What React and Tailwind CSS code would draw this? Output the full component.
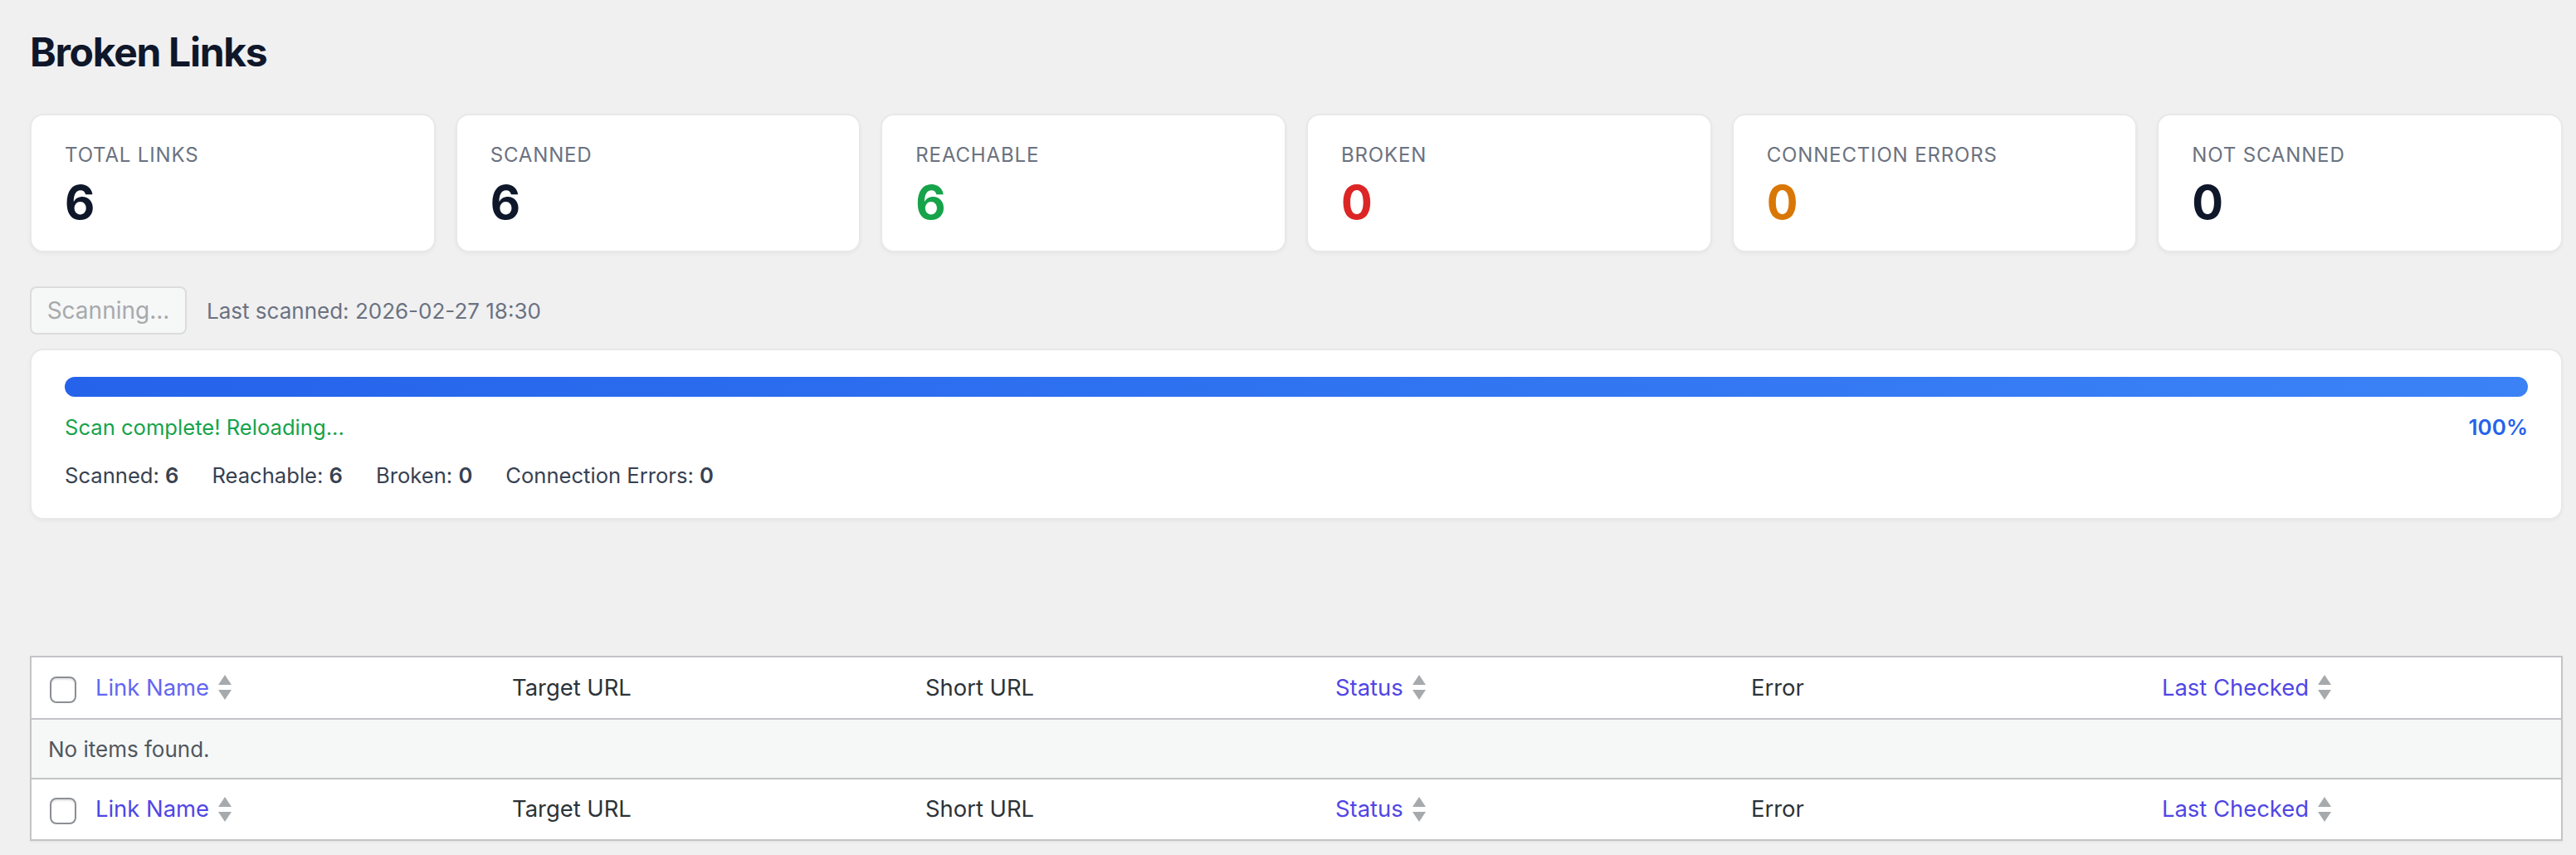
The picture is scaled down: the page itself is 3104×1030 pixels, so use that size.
const stats = [
  { label: 'Total Links', value: 6, color: 'text-[#0f172a]' },
  { label: 'Scanned', value: 6, color: 'text-[#0f172a]' },
  { label: 'Reachable', value: 6, color: 'text-[#16a34a]' },
  { label: 'Broken', value: 0, color: 'text-[#dc2626]' },
  { label: 'Connection Errors', value: 0, color: 'text-[#d97706]' },
  { label: 'Not Scanned', value: 0, color: 'text-[#0f172a]' },
];

const results = [
  { label: 'Scanned', value: 6 },
  { label: 'Reachable', value: 6 },
  { label: 'Broken', value: 0 },
  { label: 'Connection Errors', value: 0 },
];

const SortIcon = () => (
  <svg width="16" height="30" viewBox="0 0 16 30" className="ml-[11px] shrink-0 fill-[#a7aaad]">
    <path d="M8 0l8 12H0z" />
    <path d="M0 18h16l-8 12z" />
  </svg>
);

const Sortable = ({ children, light }) => (
  <a href="#" className={`flex items-center ${light ? 'text-[#6366f1]' : 'text-[#4f46e5]'}`}>
    {children}
    <SortIcon />
  </a>
);

const HeaderRow = ({ first }) => (
  <tr className={`${first ? 'h-[75px]' : 'h-[74px]'} bg-white text-left`}>
    <th className="w-[58px] p-0 font-normal">
      <input
        type="checkbox"
        className="mt-1 ml-[22px] block size-8 appearance-none rounded-lg border-2 border-[#8c8f94] bg-white shadow-[inset_0_2px_2px_rgba(0,0,0,0.1)]"
      />
    </th>
    <th className="w-[502px] pl-5 font-normal"><Sortable light={first}>Link Name</Sortable></th>
    <th className="w-[498px] pl-5 font-normal">Target URL</th>
    <th className="w-[494px] pl-5 font-normal">Short URL</th>
    <th className="w-[501px] pl-5 font-normal"><Sortable>Status</Sortable></th>
    <th className="w-[495px] pl-5 font-normal">Error</th>
    <th className="pl-5 font-normal"><Sortable>Last Checked</Sortable></th>
  </tr>
);

export default function App() {
  return (
    <div className="min-h-screen bg-[#f0f0f1] pt-[31px] pr-4 pl-9 font-[Inter,sans-serif] antialiased">
      <h1 className="text-[48px] leading-[64px] font-bold tracking-[-1.3px] text-[#0f172a]">Broken Links</h1>

      {/* Stat cards */}
      <div className="mt-[42px] grid grid-cols-6 gap-6">
        {stats.map((s) => (
          <div key={s.label} className="h-[167px] rounded-2xl border-2 border-[#e8e8ea] bg-white px-10 pt-[33px] shadow-[0_2px_4px_rgba(0,0,0,0.04)]">
            <div className="text-[24px] leading-[30px] tracking-[0.85px] text-[#6b7280] uppercase">{s.label}</div>
            <div className={`mt-[14px] text-[56px] leading-[56px] font-bold ${s.color}`}>{s.value}</div>
          </div>
        ))}
      </div>

      {/* Scan button */}
      <div className="mt-[41px] flex items-center">
        <button disabled className="h-[58px] w-[189px] rounded-lg border-2 border-[#dcdcde] bg-[#f6f7f7] text-[28px] text-[#a7aaad]">
          Scanning...
        </button>
        <span className="ml-6 text-[26px] text-[#6b7280]">Last scanned: 2026-02-27 18:30</span>
      </div>

      {/* Progress panel */}
      <div className="mt-[17px] h-[206px] rounded-2xl border-2 border-[#e8e8ea] bg-white px-10 pt-8 shadow-[0_2px_4px_rgba(0,0,0,0.04)]">
        <div className="h-6 rounded-full bg-gradient-to-r from-[#2563eb] to-[#3b82f6]" />
        <div className="mt-[19px] flex justify-between text-[25.6px] leading-9">
          <span className="text-[#16a34a]">Scan complete! Reloading...</span>
          <span className="text-[26px] font-semibold text-[#2563eb]">100%</span>
        </div>
        <div className="mt-[22px] flex gap-10 text-[25.6px] leading-9 text-[#374151]">
          {results.map((r) => (
            <span key={r.label}>
              {r.label}: <strong className="font-semibold">{r.value}</strong>
            </span>
          ))}
        </div>
      </div>

      {/* Links table */}
      <table className="mt-[164px] w-full table-fixed border-2 border-[#c3c4c7] text-[27.4px] text-[#2c3338] shadow-[0_2px_2px_rgba(0,0,0,0.04)]">
        <thead className="border-b-2 border-[#c3c4c7]">
          <HeaderRow first />
        </thead>
        <tbody>
          <tr className="h-[72px] bg-[#f6f7f7]">
            <td colSpan={7} className="pl-5 text-[26px] text-[#50575e]">No items found.</td>
          </tr>
        </tbody>
        <tfoot className="border-t-2 border-[#c3c4c7]">
          <HeaderRow />
        </tfoot>
      </table>
    </div>
  );
}
